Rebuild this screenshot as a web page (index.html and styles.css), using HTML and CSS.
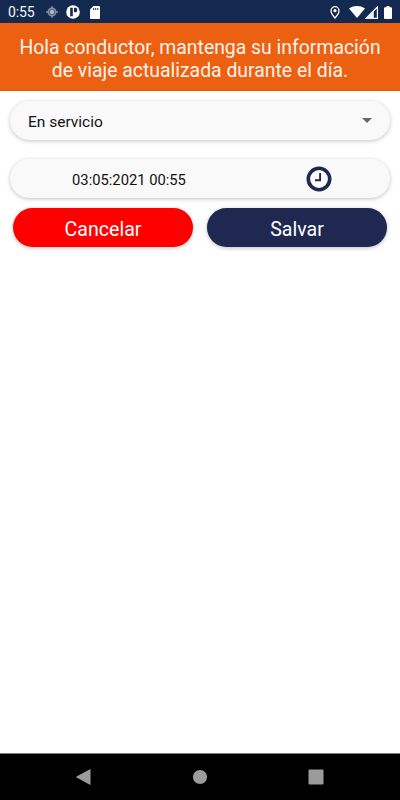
FILE: index.html
```html
<!DOCTYPE html>
<html lang="es">
<head>
<meta charset="utf-8">
<title>Estado del conductor</title>
<link rel="stylesheet" href="styles.css">
</head>
<body>
<div class="screen">
  <div class="status">
    <span class="time">0:55</span>
    <svg class="gps" width="12" height="12" viewBox="0 0 12 12"><path d="M6 0v12M0 6h12" stroke="#8791a6" stroke-width="1.3"/><circle cx="6" cy="6" r="3.8" fill="#4b5b78" stroke="#8791a6" stroke-width="1.4"/><circle cx="6" cy="6" r="2.2" fill="#b0b7c4"/></svg>
    <svg class="app" width="14" height="14" viewBox="0 0 14 14"><circle cx="7" cy="7" r="6.8" fill="#fff"/><path d="M4.2 2.8h2.6v8.4H4.2zM8 2.8h1.2a2.2 2.2 0 0 1 0 4.4H8z" fill="#14294f"/></svg>
    <svg class="sd" width="10" height="13" viewBox="0 0 10 13"><path d="M3.5 0H9a1 1 0 0 1 1 1v11a1 1 0 0 1-1 1H1a1 1 0 0 1-1-1V3.5z" fill="#fff"/><path d="M3.6 2v2M5.7 2v2M7.8 2v2" stroke="#14294f" stroke-width="1"/></svg>
    <span class="spacer"></span>
    <svg class="pin" width="10" height="13" viewBox="0 0 10 13"><path d="M5 .7a4 4 0 0 0-4 4C1 7.500 5 12 5 12s4-4.500 4-7.300a4 4 0 0 0-4-4z" fill="none" stroke="#fff" stroke-width="1.300"/><circle cx="5" cy="4.700" r="1.600" fill="#fff"/></svg>
    <svg class="wifi" width="16" height="12" viewBox="0 0 16 12"><path d="M8 12L0 2.500C4.500-.8 11.500-.8 16 2.500z" fill="#fff"/></svg>
    <svg class="signal" width="13" height="13" viewBox="0 0 13 13"><path d="M12.400 1v11.400H1z" fill="none" stroke="#fff" stroke-width="1.200"/><path d="M0 13L8.800 4.200V13z" fill="#e9ecf1"/></svg>
    <svg class="battery" width="8" height="13" viewBox="0 0 8 13"><path d="M2.500 0h3v1.300H7a1 1 0 0 1 1 1V12a1 1 0 0 1-1 1H1a1 1 0 0 1-1-1V2.300a1 1 0 0 1 1-1h1.500z" fill="#fff"/></svg>
  </div>
  <header class="banner">Hola conductor, mantenga su información<br>de viaje actualizada durante el día.</header>
  <main class="content">
    <div class="field select">
      <span class="label">En servicio</span>
      <svg width="10" height="5" viewBox="0 0 10 5"><path d="M0 0h10L5 5z" fill="#686868"/></svg>
    </div>
    <div class="field datetime">
      <span class="date">03:05:2021 00:55</span>
      <svg width="26" height="26" viewBox="0 0 26 26"><circle cx="13" cy="13" r="10.700" fill="#fff" stroke="#1e2850" stroke-width="3.600"/><path d="M14.100 7v7.200H9" fill="none" stroke="#1e2850" stroke-width="1.900"/></svg>
    </div>
    <div class="actions">
      <button class="btn cancel">Cancelar</button>
      <button class="btn save">Salvar</button>
    </div>
  </main>
  <nav class="navbar">
    <svg width="16" height="16" viewBox="0 0 16 16"><path d="M14.500 .5v15q0 .6-.6.3L.6 8.500Q0 8 .6 7.500L13.900.2q.6-.3.600.3z" fill="#9b9b9b"/></svg>
    <svg width="16" height="16" viewBox="0 0 16 16"><circle cx="8" cy="8" r="7.100" fill="#9b9b9b"/></svg>
    <svg width="16" height="16" viewBox="0 0 16 16"><rect x=".5" y=".5" width="15" height="15" rx="1" fill="#9b9b9b"/></svg>
  </nav>
</div>
</body>
</html>
```
FILE: styles.css
```css
* { box-sizing: border-box; }
body { margin: 0; background: #fff; font-family: Roboto, sans-serif; color: #111; }
svg { display: block; flex: none; }
.screen { display: flex; flex-direction: column; width: 400px; height: 800px; }
.status { display: flex; align-items: center; height: 23px; padding: 1px 8px 0 8px; background: #14294f; color: #f2f4f8; }
.time { width: 38px; font-size: 14px; line-height: 22px; letter-spacing: -.15px; }
.app { margin-left: 8px; }
.sd { margin-left: 10px; }
.spacer { flex: 1; }
.wifi { margin-left: 9px; }
.signal { margin-left: 0; }
.battery { margin-left: 6px; }
.banner { height: 68px; padding-top: 13px; background: #ec6011; border-bottom: 1px solid #f45408; color: #fff3ec; font-size: 19.4px; line-height: 23px; text-align: center; white-space: nowrap; }
.content { flex: 1; padding: 10px 10px 0; }
.field { display: flex; align-items: center; background: #f9f9f9; border-radius: 20px; box-shadow: 0 1px 4px rgba(0, 0, 0, .24); }
.select { justify-content: space-between; height: 39px; padding: 0 18px 0 18px; font-size: 15.5px; }
.label { padding-top: 2px; }
.datetime { height: 39px; margin-top: 19px; padding-top: 1px; font-size: 14.75px; }
.date { width: 238px; padding-top: 2px; text-align: center; }
.datetime svg { margin: -1px 0 0 58px; }
.actions { display: flex; gap: 14px; padding: 10px 3px 0 3px; }
.btn { flex: 1; height: 39px; padding: 3px 0 0; border: 0; border-radius: 20px; box-shadow: 0 1px 4px rgba(0, 0, 0, .26); color: #fff; font: 19.6px Roboto, sans-serif; }
.cancel { background: #f00; }
.save { background: #1e2850; }
.navbar { display: flex; justify-content: space-between; align-items: center; height: 47px; padding: 0 76px; border-top: 1px solid #777; background: #000; }
```
